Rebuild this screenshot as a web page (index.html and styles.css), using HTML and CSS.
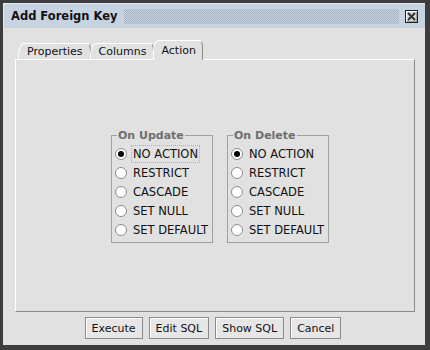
FILE: index.html
```html
<!DOCTYPE html>
<html lang="en">
<head>
	<meta charset="utf-8">
	<title>Add Foreign Key</title>
	<link rel="stylesheet" href="styles.css">
</head>
<body>
	<div class="window">
		<div class="titlebar">
			<span class="title">Add Foreign Key</span>
			<span class="grip"></span>
			<span class="close">
				<svg width="11" height="11" viewBox="0 0 11 11"><path d="M2 2 L9 9 M9 2 L2 9" stroke="#333" stroke-width="2" fill="none"/></svg>
			</span>
		</div>

		<div class="tabs">
			<span class="tab">Properties</span>
			<span class="tab">Columns</span>
			<span class="tab selected">Action</span>
		</div>

		<div class="panel">
			<fieldset class="group">
				<legend>On Update</legend>
				<div class="option"><span class="radio checked"></span><span class="label focus">NO ACTION</span></div>
				<div class="option"><span class="radio"></span><span class="label">RESTRICT</span></div>
				<div class="option"><span class="radio"></span><span class="label">CASCADE</span></div>
				<div class="option"><span class="radio"></span><span class="label">SET NULL</span></div>
				<div class="option"><span class="radio"></span><span class="label">SET DEFAULT</span></div>
			</fieldset>
			<fieldset class="group">
				<legend>On Delete</legend>
				<div class="option"><span class="radio checked"></span><span class="label">NO ACTION</span></div>
				<div class="option"><span class="radio"></span><span class="label">RESTRICT</span></div>
				<div class="option"><span class="radio"></span><span class="label">CASCADE</span></div>
				<div class="option"><span class="radio"></span><span class="label">SET NULL</span></div>
				<div class="option"><span class="radio"></span><span class="label">SET DEFAULT</span></div>
			</fieldset>
		</div>

		<div class="buttons">
			<button>Execute</button>
			<button>Edit SQL</button>
			<button>Show SQL</button>
			<button>Cancel</button>
		</div>
	</div>
</body>
</html>
```

FILE: styles.css
```css
html, body { margin: 0; padding: 0; }

body {
  font-family: "DejaVu Sans", Verdana, sans-serif;
  font-size: 11px;
  color: #111;
  background: #e1e1e1;
}

.window {
  width: 430px;
  height: 350px;
  box-sizing: border-box;
  border: 3px solid #3d3d3d;
  border-right-width: 5px;
  border-bottom-width: 5px;
  background: #e1e1e1;
  display: flex;
  flex-direction: column;
}

/* title bar */
.titlebar {
  height: 25px;
  flex: none;
  display: flex;
  align-items: center;
  padding: 0 7px 0 7px;
  background: #c8d3e2;
  border-top: 1px solid #e4eaf2;
  border-left: 1px solid #e4eaf2;
  box-sizing: border-box;
}

.title { font-weight: bold; font-size: 11.5px; color: #111; white-space: nowrap; }

.grip {
  flex: 1;
  height: 15px;
  margin: 0 6px 0 6px;
  background: repeating-conic-gradient(#a6b1c2 0 25%, transparent 0 50%) 0 0 / 2px 2px;
}

.close {
  width: 11px;
  height: 11px;
  border: 1px solid #222;
  box-shadow: inset 1px 1px 0 #fff, inset -1px -1px 0 #9a9a9a;
  background: #d6d6d6;
  display: flex;
}

/* tabs */
.tabs {
  flex: none;
  display: flex;
  align-items: flex-end;
  height: 19px;
  margin: 12px 0 0 15px;
  position: relative;
  z-index: 1;
}

.tab {
  height: 15px;
  line-height: 15px;
  padding: 0 7px 0 8px;
  border: 1px solid #fff;
  border-right-color: #8a8a8a;
  border-bottom: none;
  border-top-left-radius: 6px 12px;
  border-top-right-radius: 3px 8px;
  background: #e1e1e1;
  color: #111;
}

.tab + .tab { margin-left: -1px; }

.tab.selected {
  height: 19px;
  line-height: 19px;
  padding: 0 6px 0 7px;
  margin-bottom: -1px;
}

/* panel */
.panel {
  height: 253px;
  box-sizing: border-box;
  margin: 0 10px 0 12px;
  border: 1px solid #fff;
  border-right-color: #8a8a8a;
  border-bottom-color: #8a8a8a;
  display: flex;
  justify-content: center;
  align-items: center;
  gap: 14px;
  padding-left: 10px;
}

.group {
  width: 102px;
  box-sizing: border-box;
  margin: 0;
  padding: 3px 2px 2px 2px;
  border: 1px solid #a0a0a0;
}

.group legend {
  font-weight: bold;
  color: #6e6e6e;
  padding: 0 1px;
  margin-left: 3px;
  line-height: 13px;
}

.option {
  height: 19px;
  display: flex;
  align-items: center;
}

.radio {
  width: 10px;
  height: 10px;
  border: 1px solid #8c8c8c;
  border-radius: 50%;
  background: #fff;
  margin: 0 4px 0 1px;
  display: flex;
  align-items: center;
  justify-content: center;
}

.radio.checked::after {
  content: "";
  width: 6px;
  height: 6px;
  border-radius: 50%;
  background: #000;
}

.label {
  font-size: 11.5px;
  padding: 1px 1px;
  border: 1px solid transparent;
  white-space: nowrap;
}

.label.focus { border: 1px dotted #9fb1c9; }

/* buttons */
.buttons {
  flex: none;
  display: flex;
  justify-content: center;
  gap: 6px;
  margin-top: 5px;
  padding-right: 2px;
}

button {
  height: 22px;
  padding: 0 6px;
  font-family: "DejaVu Sans", Verdana, sans-serif;
  font-size: 11px;
  color: #111;
  background: #e6e6e6;
  border: 1px solid #8a8a8a;
  box-shadow: inset 1px 1px 0 #fff;
  border-radius: 0;
}
```
